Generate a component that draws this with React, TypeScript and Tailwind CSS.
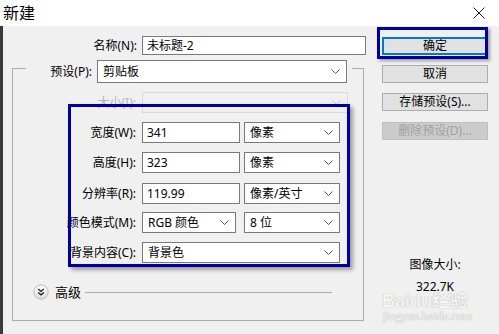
import React from 'react';

const Chevron = () => (
  <svg width="9" height="5" viewBox="0 0 9 5" className="shrink-0">
    <path d="M0.5 0.5 L4.5 4.5 L8.5 0.5" fill="none" stroke="#555" strokeWidth="1" />
  </svg>
);

function TextBox({ value, width }: { value: string; width: string }) {
  return (
    <div className={`${width} h-[21px] bg-white border border-[#7a7a7a] flex items-center px-[4px] text-black`}>
      {value}
    </div>
  );
}

function Select({ value, width, height = 'h-[21px]', disabled = false }: { value: string; width: string; height?: string; disabled?: boolean }) {
  return (
    <div
      className={`${width} ${height} border flex items-center justify-between pl-[5px] pr-[6px] ${
        disabled ? 'bg-[#f0f0f0] border-[#d9d9d9]' : 'bg-white border-[#7a7a7a]'
      }`}
    >
      <span className="text-black">{value}</span>
      {disabled ? (
        <svg width="9" height="5" viewBox="0 0 9 5">
          <path d="M0.5 0.5 L4.5 4.5 L8.5 0.5" fill="none" stroke="#c8c8c8" strokeWidth="1" />
        </svg>
      ) : (
        <Chevron />
      )}
    </div>
  );
}

function Row({ label, mt, children, faded = false }: { label: string; mt: string; children: React.ReactNode; faded?: boolean }) {
  return (
    <div className={`flex items-center ${mt}`}>
      <div className={`w-[124px] text-right pr-[1px] ${faded ? 'text-[#b4b4b4]' : 'text-black'}`}>{label}</div>
      <div className="ml-[5px] flex gap-[4px]">{children}</div>
    </div>
  );
}

function Button({ label, mt, disabled = false, primary = false }: { label: string; mt: string; disabled?: boolean; primary?: boolean }) {
  return (
    <div
      className={`${mt} h-[18px] w-[106px] flex items-center justify-center border ${
        primary ? 'border-[#0078d7] border-2 bg-[#e1e1e1]' : disabled ? 'border-[#bfbfbf] bg-[#cccccc]' : 'border-[#adadad] bg-[#e1e1e1]'
      } ${disabled ? 'text-[#a0a0a0]' : 'text-black'}`}
    >
      {label}
    </div>
  );
}

export default function App() {
  return (
    <div className="relative w-[499px] h-[334px] overflow-hidden bg-[#f0f0f0] font-['Noto_Sans','Noto_Sans_CJK_SC',sans-serif] text-[12px] leading-[16px]">
      {/* Title bar */}
      <div className="h-[26px] bg-white flex items-center justify-between pl-[3px] pr-[14px]">
        <span className="text-[16px] leading-[20px] text-black">新建</span>
        <svg width="12" height="12" viewBox="0 0 12 12">
          <path d="M0.5 0.5 L11.5 11.5 M11.5 0.5 L0.5 11.5" stroke="#222" strokeWidth="1" />
        </svg>
      </div>

      <div className="flex border-l-[3px] border-[#3a3a3a] h-[308px]">
        {/* Left column */}
        <div className="w-[372px]">
          <div className="flex items-center mt-[10px]">
            <div className="w-[134px] text-right text-black">名称(N):</div>
            <div className="ml-[5px] w-[224px] h-[19px] bg-white border border-[#7a7a7a] flex items-center px-[4px] text-black">
              未标题-2
            </div>
          </div>

          {/* Group box */}
          <div className="ml-[9px] mt-[13px] w-[352px] h-[253px] border border-[#acacac]">
            <div className="-mt-[9px] ml-[13px] w-[326px] h-[23px] bg-[#f0f0f0] flex items-center">
              <div className="w-[66px] text-right text-black">预设(P):</div>
              <div className="ml-[5px]">
                <Select value="剪贴板" width="w-[250px]" height="h-[23px]" />
              </div>
            </div>

            <Row label="大小(I):" mt="mt-[9px]" faded>
              <Select value="" width="w-[206px]" disabled />
            </Row>
            <Row label="宽度(W):" mt="mt-[9px]">
              <TextBox value="341" width="w-[98px]" />
              <Select value="像素" width="w-[96px]" />
            </Row>
            <Row label="高度(H):" mt="mt-[9px]">
              <TextBox value="323" width="w-[98px]" />
              <Select value="像素" width="w-[96px]" />
            </Row>
            <Row label="分辨率(R):" mt="mt-[10px]">
              <TextBox value="119.99" width="w-[98px]" />
              <Select value="像素/英寸" width="w-[96px]" />
            </Row>
            <Row label="颜色模式(M):" mt="mt-[8px]">
              <Select value="RGB 颜色" width="w-[94px]" />
              <div className="ml-[4px]">
                <Select value="8 位" width="w-[96px]" />
              </div>
            </Row>
            <Row label="背景内容(C):" mt="mt-[9px]">
              <Select value="背景色" width="w-[198px]" />
            </Row>

            {/* Advanced */}
            <div className="flex items-center mt-[21px] ml-[20px]">
              <svg width="16" height="16" viewBox="0 0 16 16">
                <defs>
                  <linearGradient id="adv" x1="0" y1="0" x2="0" y2="1">
                    <stop offset="0" stopColor="#ffffff" />
                    <stop offset="1" stopColor="#dcdcdc" />
                  </linearGradient>
                </defs>
                <circle cx="8" cy="8" r="7.2" fill="url(#adv)" stroke="#b5b5b5" strokeWidth="0.9" />
                <path d="M5.2 5 L8 7.4 L10.8 5 M5.2 8.4 L8 10.8 L10.8 8.4" fill="none" stroke="#222" strokeWidth="1.3" />
              </svg>
              <span className="ml-[6px] text-[13px] text-black">高级</span>
              <div className="ml-[4px] w-[247px] h-px bg-[#acacac]" />
            </div>
          </div>
        </div>

        {/* Right column */}
        <div className="ml-[7px] w-[106px] flex flex-col">
          <Button label="确定" mt="mt-[11px]" primary />
          <Button label="取消" mt="mt-[10px]" />
          <Button label="存储预设(S)..." mt="mt-[10px]" />
          <Button label="删除预设(D)..." mt="mt-[11px]" disabled />
          <div className="mt-[117px] text-center text-black leading-[16px]">图像大小:</div>
          <div className="mt-[8px] text-center text-black leading-[12px]">322.7K</div>
        </div>
      </div>

      {/* Annotation highlights */}
      <div className="absolute left-[68px] top-[104px] w-[282px] h-[163px] border-[3px] border-[#0000a0] shadow-[3px_3px_4px_rgba(0,0,0,0.35)]" />
      <div className="absolute left-[377px] top-[27px] w-[111px] h-[32px] border-[3px] border-[#0000a0] shadow-[2px_2px_3px_rgba(0,0,0,0.35)]" />

      {/* Watermark */}
      <div className="absolute left-[382px] top-[295px] text-[18px] leading-[13px] font-bold text-[#f4f4f4] [text-shadow:0_0_1px_#9a9a9a] font-['Liberation_Sans','Noto_Sans_CJK_SC',sans-serif]">
        Baidu经验
      </div>
      <div className="absolute left-[383px] top-[310px] text-[12px] leading-[12px] text-[#f4f4f4] [text-shadow:0_0_1px_#9a9a9a] font-['Liberation_Serif',serif]">
        jingyan.baidu.com
      </div>
    </div>
  );
}
